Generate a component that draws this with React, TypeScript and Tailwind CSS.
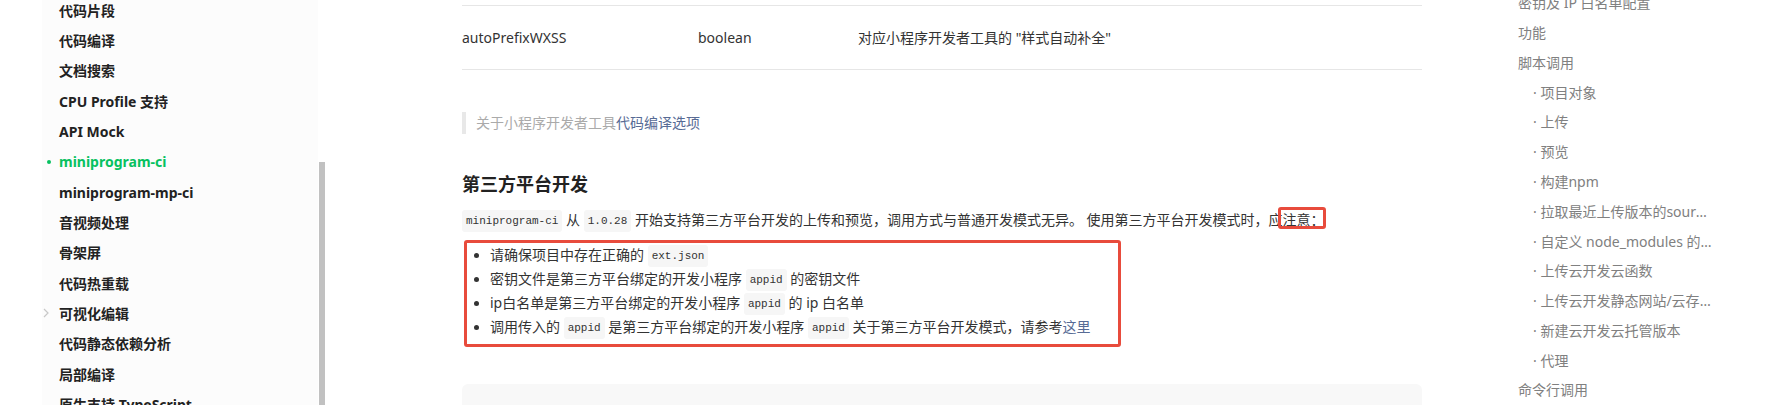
const sideItems = [
  "代码片段",
  "代码编译",
  "文档搜索",
  "CPU Profile 支持",
  "API Mock",
  "miniprogram-ci",
  "miniprogram-mp-ci",
  "音视频处理",
  "骨架屏",
  "代码热重载",
  "可视化编辑",
  "代码静态依赖分析",
  "局部编译",
  "原生支持 TypeScript",
];

const tocItems: { text: string; sub?: boolean }[] = [
  { text: "密钥及 IP 白名单配置" },
  { text: "功能" },
  { text: "脚本调用" },
  { text: "项目对象", sub: true },
  { text: "上传", sub: true },
  { text: "预览", sub: true },
  { text: "构建npm", sub: true },
  { text: "拉取最近上传版本的sourceMap", sub: true },
  { text: "自定义 node_modules 的位置", sub: true },
  { text: "上传云开发云函数", sub: true },
  { text: "上传云开发静态网站/云存储", sub: true },
  { text: "新建云开发云托管版本", sub: true },
  { text: "代理", sub: true },
  { text: "命令行调用" },
];

function Code({ children }: { children: string }) {
  return (
    <code className="inline-block align-middle px-[4px] rounded-[3px] bg-[#f6f6f6] text-[#333] text-[11px] leading-[22px] font-['Liberation_Mono',monospace]">
      {children}
    </code>
  );
}

function Bullet({ children }: { children: React.ReactNode }) {
  return (
    <li className="flex items-center h-[24px]">
      <span className="w-[5px] h-[5px] rounded-full bg-[#333] shrink-0" />
      <span className="ml-[11px] whitespace-nowrap">{children}</span>
    </li>
  );
}

export default function App() {
  return (
    <div className="flex w-[1772px] h-[405px] overflow-hidden bg-white text-[14px] text-[#333] font-['Noto_Sans','Noto_Sans_CJK_SC',sans-serif]">
      {/* left nav */}
      <div className="w-[42px] shrink-0" />
      <div className="w-[276px] shrink-0 bg-[#fcfcfc]">
        <div className="-mt-[5px] flex flex-col">
          {sideItems.map((item) => {
            const active = item === "miniprogram-ci";
            return (
              <div key={item} className="h-[30.33px] flex items-center shrink-0">
                <div className="w-[17px] flex items-center pl-[1px]">
                  {active && <span className="ml-[4px] w-[4px] h-[4px] rounded-full bg-[#07c160]" />}
                  {item === "可视化编辑" && (
                    <svg width="6" height="10" viewBox="0 0 6 10" className="ml-[0px]">
                      <path d="M1 1l4 4-4 4" fill="none" stroke="#c8c8c8" strokeWidth="1.2" />
                    </svg>
                  )}
                </div>
                <span className={`font-bold whitespace-nowrap ${active ? "text-[#07c160]" : "text-[#222]"}`}>
                  {item}
                </span>
              </div>
            );
          })}
        </div>
      </div>
      <div className="w-[8px] shrink-0 pt-[162px] pl-[1px]">
        <div className="w-[6px] h-full bg-[#c1c1c1]" />
      </div>

      {/* main */}
      <div className="w-[136px] shrink-0" />
      <div className="w-[960px] shrink-0 pt-[5px]">
        <div className="grid grid-cols-[236px_160px_1fr] items-center h-[65px] border-y border-[#e6e6e6]">
          <span>autoPrefixWXSS</span>
          <span>boolean</span>
          <span>对应小程序开发者工具的 "样式自动补全"</span>
        </div>

        <div className="mt-[42px] h-[22px] border-l-4 border-[#e8e8e8] pl-[10px] leading-[22px] text-[#aaa]">
          关于小程序开发者工具<span className="text-[#576b95]">代码编译选项</span>
        </div>

        <h3 className="mt-[37px] text-[18px] leading-[26px] font-bold text-[#222]">第三方平台开发</h3>

        <p className="mt-[11px] leading-[24px] whitespace-nowrap">
          <Code>miniprogram-ci</Code> 从 <Code>1.0.28</Code> 开始支持第三方平台开发的上传和预览，调用方式与普通开发模式无异。 使用第三方平台开发模式时，应
          <span className="relative inline-block">
            注意：
            <span className="absolute left-[-5px] right-[-1px] top-[-1px] bottom-[3px] border-[3px] border-[#e84b3c] rounded-[3px]" />
          </span>
        </p>

        <ul className="mt-[8px] ml-[2px] w-[657px] border-[3px] border-[#e84b3c] rounded-[3px] pl-[7px] pb-[5px]">
          <Bullet>
            请确保项目中存在正确的 <Code>ext.json</Code>
          </Bullet>
          <Bullet>
            密钥文件是第三方平台绑定的开发小程序 <Code>appid</Code> 的密钥文件
          </Bullet>
          <Bullet>
            ip白名单是第三方平台绑定的开发小程序 <Code>appid</Code> 的 ip 白名单
          </Bullet>
          <Bullet>
            调用传入的 <Code>appid</Code> 是第三方平台绑定的开发小程序 <Code>appid</Code> 关于第三方平台开发模式，请参考
            <span className="text-[#576b95]">这里</span>
          </Bullet>
        </ul>

        <div className="mt-[37px] h-[60px] rounded-[6px] bg-[#f8f8f8]" />
      </div>

      {/* right toc */}
      <div className="w-[96px] shrink-0" />
      <div className="w-[254px] shrink-0 -mt-[12px] flex flex-col text-[#808080]">
        {tocItems.map((t) => (
          <div key={t.text} className={`h-[29.77px] shrink-0 flex items-center ${t.sub ? "pl-[15px]" : ""}`}>
            <span className="block w-[179px] truncate whitespace-nowrap">
              {t.sub ? "· " : ""}
              {t.text}
            </span>
          </div>
        ))}
      </div>
    </div>
  );
}
